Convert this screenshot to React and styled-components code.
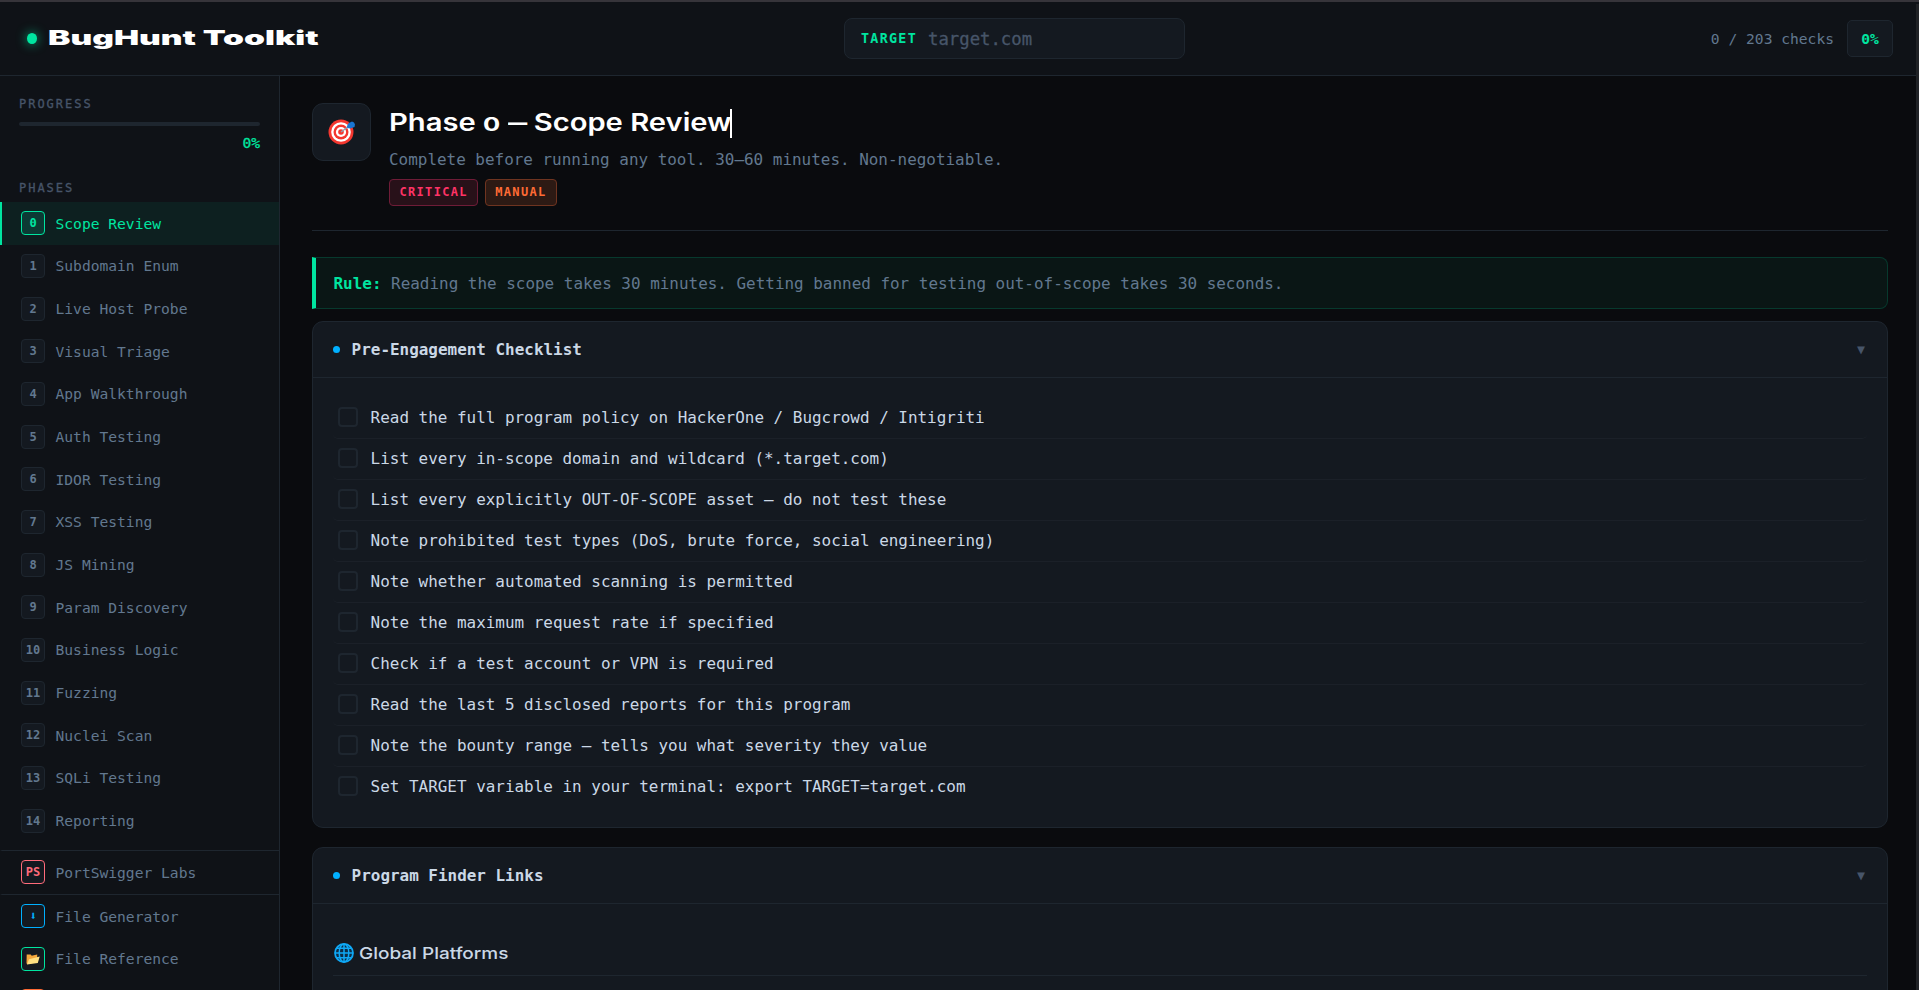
import React from "react";
import styled, { createGlobalStyle, css } from "styled-components";

const mono = `"DejaVu Sans Mono", "Liberation Mono", monospace`;
const display = `Inter, "DejaVu Sans", sans-serif`;

const c = {
  bg: "#0a0b0e",
  panel: "#0f1217",
  card: "#141920",
  border: "#1e262f",
  green: "#00e5a0",
  blue: "#00b0ff",
  muted: "#62788f",
  faint: "#475569",
  text: "#cbd8e6",
};

const GlobalStyle = createGlobalStyle`
  * { box-sizing: border-box; }
  html, body { margin: 0; height: 990px; overflow: hidden; background: ${c.bg}; }
  body { font-family: ${mono}; color: ${c.text}; }
`;

const Page = styled.div`
  height: 990px;
  display: flex;
  flex-direction: column;
  overflow: hidden;
  border-top: 2px solid #36343a;
`;

const Header = styled.header`
  height: 74px;
  flex: none;
  display: flex;
  align-items: center;
  padding: 0 26px 0 27px;
  background: ${c.panel};
  border-bottom: 1px solid ${c.border};
`;

const Brand = styled.div`
  display: flex;
  align-items: center;
  gap: 11px;
  width: 817px;
`;

const Pulse = styled.span`
  width: 10px;
  height: 11px;
  border-radius: 50%;
  background: ${c.green};
  box-shadow: 0 0 11px rgba(0, 229, 160, 0.75);
`;

const Wide = styled.span`
  display: inline-block;
  white-space: nowrap;
  transform-origin: 0 50%;
  transform: scaleX(${(p) => p.$stretch});
  font-family: ${display};
`;

const Logo = styled(Wide)`
  font-size: 20px;
  line-height: 28px;
  padding-bottom: 2px;
  font-weight: 900;
  color: #fff;
`;

const TargetBox = styled.div`
  width: 341px;
  height: 41px;
  display: flex;
  align-items: center;
  gap: 11px;
  padding: 0 16px;
  border: 1px solid ${c.border};
  border-radius: 8px;
  background: ${c.card};
`;

const TargetLabel = styled.label`
  font-size: 13.33px;
  font-weight: 700;
  letter-spacing: 1.31px;
  color: ${c.green};
`;

const Placeholder = styled.span`
  font-size: 17.3px;
  color: ${c.faint};
  -webkit-text-stroke: 0.3px;
`;

const HeaderStats = styled.div`
  flex: 1;
  display: flex;
  align-items: center;
  justify-content: flex-end;
  gap: 13px;
  font-size: 14.62px;
  color: ${c.muted};
`;

const Percent = styled.div`
  width: 46px;
  height: 37px;
  display: grid;
  place-items: center;
  border: 1px solid ${c.border};
  border-radius: 5px;
  background: ${c.card};
  color: ${c.green};
  font-weight: 700;
`;

const Body = styled.div`
  display: flex;
  flex: 1;
  min-height: 0;
`;

const Sidebar = styled.aside`
  width: 280px;
  flex: none;
  overflow: hidden;
  background: ${c.panel};
  border-right: 1px solid ${c.border};
`;

const Progress = styled.section`
  height: 92px;
  padding: 19px 19px 0;
`;

const SideLabel = styled.div`
  font-size: 12px;
  line-height: 18px;
  letter-spacing: 1.98px;
  color: ${c.faint};
  -webkit-text-stroke: 0.3px;
`;

const Track = styled.div`
  height: 4px;
  margin-top: 9px;
  border-radius: 3px;
  background: ${c.border};
`;

const ProgressValue = styled.div`
  margin-top: 7px;
  text-align: right;
  font-size: 14.62px;
  line-height: 20px;
  color: ${c.green};
  -webkit-text-stroke: 0.3px;
`;

const PhasesLabel = styled(SideLabel)`
  padding: 11px 19px 5px;
  height: 34px;
`;

const NavItem = styled.div`
  height: 42.667px;
  display: flex;
  align-items: center;
  gap: 10.5px;
  padding-left: 19px;
  border-left: 2px solid transparent;
  font-size: 14.62px;
  color: ${c.muted};
  ${(p) =>
    p.$active &&
    css`
      color: ${c.green};
      border-left-color: ${c.green};
      background: rgba(0, 229, 160, 0.07);
    `}
  ${(p) =>
    p.$ruled &&
    css`
      height: 45px;
      margin-top: 8px;
      border-top: 1px solid ${c.border};
      border-bottom: 1px solid ${c.border};
    `}
`;

const NavBadge = styled.span`
  width: 24px;
  height: 24px;
  flex: none;
  display: grid;
  place-items: center;
  overflow: hidden;
  border: 1px solid ${(p) => p.$tone || c.border};
  border-radius: 4px;
  background: ${(p) => p.$fill || c.card};
  color: ${(p) => p.$tone || c.muted};
  font-size: 12px;
  font-weight: 700;
  line-height: 22px;
`;

const Main = styled.main`
  flex: 1;
  min-width: 0;
  overflow: hidden;
  padding: 27px 31px 0 32px;
`;

const Scrollbar = styled.div`
  position: absolute;
  right: 0;
  top: 4px;
  width: 3px;
  height: 986px;
  background: #202226;
`;

const PhaseHeader = styled.section`
  height: 128px;
  display: flex;
  gap: 18px;
  border-bottom: 1px solid ${c.border};
`;

const PhaseIcon = styled.div`
  width: 59px;
  height: 58px;
  flex: none;
  display: grid;
  place-items: center;
  border: 1px solid ${c.border};
  border-radius: 11px;
  background: ${c.card};
`;

const PhaseText = styled.div`
  display: flex;
  flex-direction: column;
`;

const TitleRow = styled.div`
  display: flex;
  align-items: center;
  height: 40px;
`;

const TitleSlot = styled.div`
  width: 341px;
`;

const PhaseTitle = styled(Wide)`
  font-size: 24.5px;
  line-height: 36px;
  padding-bottom: 2px;
  font-weight: 600;
  color: #fff;
`;

const OldStyleZero = styled.span`
  display: inline-block;
  font-size: 0.76em;
  line-height: 1;
  margin: 0 1px;
  font-weight: 700;
  transform: scaleX(1.15);
`;

const ShortDash = styled.span`
  display: inline-block;
  width: 0.64em;
  transform-origin: 0 50%;
  transform: scaleX(0.66);
`;

const Caret = styled.span`
  width: 2px;
  height: 29px;
  background: #fff;
`;

const Subtitle = styled.div`
  font-size: 15.95px;
  line-height: 26px;
  margin-top: 4px;
  color: ${c.muted};
`;

const Tags = styled.div`
  display: flex;
  gap: 7px;
  margin-top: 6px;
`;

const Tag = styled.span`
  height: 27px;
  padding: 0 9px 0 9.5px;
  line-height: 25px;
  font-size: 12px;
  font-weight: 700;
  letter-spacing: 1.31px;
  border-radius: 4px;
  color: ${(p) => p.$color};
  background: ${(p) => p.$bg};
  border: 1px solid ${(p) => p.$line};
`;

const Rule = styled.div`
  height: 52px;
  margin: 26px 0 12px;
  padding-left: 17.5px;
  line-height: 51px;
  font-size: 15.95px;
  color: ${c.muted};
  background: #0a1615;
  border: 1px solid #07392d;
  border-left: 4px solid ${c.green};
  border-radius: 0 8px 8px 0;
  strong { color: ${c.green}; }
`;

const Card = styled.section`
  margin-bottom: 19px;
  border: 1px solid ${c.border};
  border-radius: 11px;
  background: ${c.card};
  overflow: hidden;
`;

const CardHead = styled.div`
  height: 56px;
  display: flex;
  align-items: center;
  padding: 0 22px 0 20px;
  border-bottom: 1px solid ${c.border};
`;

const Dot = styled.span`
  width: 7px;
  height: 7px;
  border-radius: 50%;
  background: ${c.blue};
  margin-right: 11.6px;
`;

const CardTitle = styled.h2`
  flex: 1;
  margin: 0;
  font-size: 15.95px;
  font-weight: 700;
`;

const Chevron = styled.span`
  font-size: 13.3px;
  padding-bottom: 1px;
  color: ${c.faint};
`;

const Checklist = styled.div`
  padding: 20px 20px 19px;
`;

const CheckRow = styled.div`
  height: 41px;
  display: flex;
  align-items: center;
  gap: 12.6px;
  padding: 0 0 2px 5px;
  font-size: 15.95px;
  border-bottom: 1px solid #1b2028;
  border-radius: 5px;
  &:last-child { border-bottom-color: transparent; }
`;

const CheckBox = styled.span`
  width: 20px;
  height: 20px;
  border: 2px solid ${c.border};
  border-radius: 4px;
`;

const LinksBody = styled.div`
  height: 140px;
  padding: 27px 20px;
`;

const GroupHead = styled.div`
  height: 45px;
  display: flex;
  align-items: center;
  gap: 5px;
  padding-left: 1px;
  border-bottom: 1px solid ${c.border};
`;

const GroupTitle = styled(Wide)`
  font-size: 16.5px;
  font-weight: 500;
`;

const TargetIcon = () => (
  <svg width="28" height="28" viewBox="0 0 28 28">
    <circle cx="13" cy="14" r="12.5" fill="#f4372f" />
    <circle cx="13" cy="14" r="9.8" fill="#fff" />
    <circle cx="13" cy="14" r="7.5" fill="#f4372f" />
    <circle cx="13" cy="14" r="5.1" fill="#fff" />
    <circle cx="13" cy="14" r="2.8" fill="#f4372f" />
    <path d="M13 14 21 8" stroke="#8da4b5" strokeWidth="1.4" />
    <path d="M19 8 20.5 5.2 24 3.6 26 4.6 27 6.5 26.5 9 22 10.4 19.4 10z" fill="#1976d2" />
  </svg>
);

const GlobeIcon = () => (
  <svg width="20" height="20" viewBox="0 0 20 20" fill="none" stroke="#0fa8f5" strokeWidth="1.5">
    <circle cx="10" cy="10" r="9" fill="#0d2c47" strokeWidth="1.8" />
    <ellipse cx="10" cy="10" rx="4.8" ry="9" />
    <path d="M10 1v18M1 10h18M2.6 5.3h14.8M2.6 14.7h14.8" />
  </svg>
);

const FolderIcon = () => (
  <svg width="14" height="12" viewBox="0 0 14 12">
    <path d="M.7 1.5h4l1 1.2 5.5-1.2V9L1 11.3.5 10z" fill="#f5a73b" />
    <path d="M3 6.2 13.7 3.6 11.8 10 1 11.4z" fill="#ffe082" />
  </svg>
);

const phases = [
  "Scope Review", "Subdomain Enum", "Live Host Probe", "Visual Triage", "App Walkthrough",
  "Auth Testing", "IDOR Testing", "XSS Testing", "JS Mining", "Param Discovery",
  "Business Logic", "Fuzzing", "Nuclei Scan", "SQLi Testing", "Reporting",
];

const checks = [
  "Read the full program policy on HackerOne / Bugcrowd / Intigriti",
  "List every in-scope domain and wildcard (*.target.com)",
  "List every explicitly OUT-OF-SCOPE asset — do not test these",
  "Note prohibited test types (DoS, brute force, social engineering)",
  "Note whether automated scanning is permitted",
  "Note the maximum request rate if specified",
  "Check if a test account or VPN is required",
  "Read the last 5 disclosed reports for this program",
  "Note the bounty range — tells you what severity they value",
  "Set TARGET variable in your terminal: export TARGET=target.com",
];

export default function App() {
  return (
    <Page>
      <GlobalStyle />
      <Header>
        <Brand>
          <Pulse />
          <Logo $stretch={1.677}>BugHunt Toolkit</Logo>
        </Brand>
        <TargetBox>
          <TargetLabel>TARGET</TargetLabel>
          <Placeholder>target.com</Placeholder>
        </TargetBox>
        <HeaderStats>
          <span>0 / 203 checks</span>
          <Percent>0%</Percent>
        </HeaderStats>
      </Header>
      <Body>
        <Sidebar>
          <Progress>
            <SideLabel>PROGRESS</SideLabel>
            <Track />
            <ProgressValue>0%</ProgressValue>
          </Progress>
          <PhasesLabel>PHASES</PhasesLabel>
          {phases.map((name, i) => (
            <NavItem key={name} $active={i === 0}>
              <NavBadge $tone={i === 0 ? c.green : undefined} $fill={i === 0 ? "#0c3a34" : undefined}>{i}</NavBadge>
              {name}
            </NavItem>
          ))}
          <NavItem $ruled>
            <NavBadge $tone="#ff6b7a">PS</NavBadge>
            PortSwigger Labs
          </NavItem>
          <NavItem>
            <NavBadge $tone={c.blue}>⬇</NavBadge>
            File Generator
          </NavItem>
          <NavItem>
            <NavBadge $tone={c.green}><FolderIcon /></NavBadge>
            File Reference
          </NavItem>
          <NavItem>
            <NavBadge $tone="#ff6b35" />
          </NavItem>
        </Sidebar>
        <Main>
          <PhaseHeader>
            <PhaseIcon><TargetIcon /></PhaseIcon>
            <PhaseText>
              <TitleRow>
                <TitleSlot>
                  <PhaseTitle $stretch={1.19}>
                    Phase <OldStyleZero>0</OldStyleZero> <ShortDash>—</ShortDash> Scope Review
                  </PhaseTitle>
                </TitleSlot>
                <Caret />
              </TitleRow>
              <Subtitle>Complete before running any tool. 30–60 minutes. Non-negotiable.</Subtitle>
              <Tags>
                <Tag $color="#ff3366" $bg="#281119" $line="#6f1c37">CRITICAL</Tag>
                <Tag $color="#ff6b35" $bg="#2d1a14" $line="#6f3420">MANUAL</Tag>
              </Tags>
            </PhaseText>
          </PhaseHeader>
          <Rule><strong>Rule:</strong> Reading the scope takes 30 minutes. Getting banned for testing out-of-scope takes 30 seconds.</Rule>
          <Card>
            <CardHead><Dot /><CardTitle>Pre-Engagement Checklist</CardTitle><Chevron>▼</Chevron></CardHead>
            <Checklist>
              {checks.map((t) => (
                <CheckRow key={t}><CheckBox />{t}</CheckRow>
              ))}
            </Checklist>
          </Card>
          <Card>
            <CardHead><Dot /><CardTitle>Program Finder Links</CardTitle><Chevron>▼</Chevron></CardHead>
            <LinksBody>
              <GroupHead><GlobeIcon /><GroupTitle $stretch={1.15}>Global Platforms</GroupTitle></GroupHead>
            </LinksBody>
          </Card>
        </Main>
      </Body>
      <Scrollbar />
    </Page>
  );
}
